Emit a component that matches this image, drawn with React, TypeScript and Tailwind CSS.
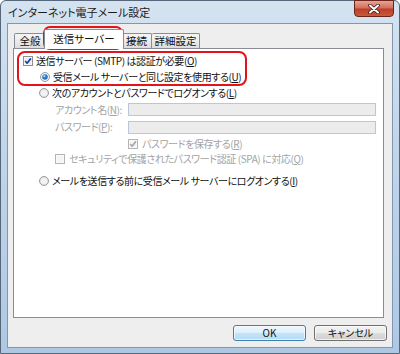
import type { ReactNode } from "react";

function Key({ k }: { k: string }) {
  return <span className="underline underline-offset-[1px]">{k}</span>;
}

function CheckBox({ checked, disabled }: { checked?: boolean; disabled?: boolean }) {
  const border = disabled ? "#b4b4b4" : "#8e8f8f";
  const fill = disabled ? "#f4f4f4" : "#e9eef6";
  const mark = disabled ? "#a8a8a8" : "#21409a";
  return (
    <svg width="10" height="10" viewBox="0 0 10 10" className="shrink-0">
      <rect x="0.5" y="0.5" width="9" height="9" fill="#ffffff" stroke={border} />
      <rect x="1.5" y="1.5" width="7" height="7" fill={fill} />
      {checked && (
        <path d="M2.2 5 L4.1 7.2 L7.9 2.4" stroke={mark} strokeWidth="1.7" fill="none" strokeLinejoin="round" />
      )}
    </svg>
  );
}

function Radio({ selected }: { selected?: boolean }) {
  return (
    <svg width="10" height="10" viewBox="0 0 10 10" className="shrink-0">
      <circle cx="5" cy="5" r="4.5" fill={selected ? "#eef3f8" : "#e4e5e7"} stroke="#9a9ca0" />
      {!selected && <circle cx="5" cy="5" r="3" fill="#f3f3f3" />}
      {selected && (
        <>
          <circle cx="5" cy="5" r="2.8" fill="#2b74c8" />
          <circle cx="4.3" cy="4.2" r="1.1" fill="#a9d6fb" />
        </>
      )}
    </svg>
  );
}

function Row({ children, className }: { children: ReactNode; className: string }) {
  return <div className={"flex items-center whitespace-nowrap " + className}>{children}</div>;
}

function Tab({ label, selected, className }: { label: string; selected?: boolean; className: string }) {
  if (selected) {
    return (
      <div
        className={
          "relative z-10 -mx-[2px] -mb-[1px] h-[20px] flex items-center justify-center border border-b-0 border-[#898c95] bg-white rounded-t-[2px] " +
          className
        }
      >
        {label}
      </div>
    );
  }
  return (
    <div
      className={
        "h-[15px] flex items-center justify-center border border-b-0 border-l-0 first:border-l border-[#898c95] bg-[linear-gradient(180deg,#f5f5f5_0%,#ebebeb_50%,#dcdcdc_100%)] rounded-t-[2px] " +
        className
      }
    >
      {label}
    </div>
  );
}

export default function App() {
  return (
    <div className="relative w-[400px] h-[354px] overflow-hidden bg-white font-['Noto_Sans_CJK_JP',sans-serif] text-[10px] tracking-[-0.4px] leading-none text-[#111] [font-feature-settings:'palt']">
      {/* window frame */}
      <div className="w-[400px] h-[354px] flex flex-col rounded-t-[6px] border border-[#56677a] bg-[linear-gradient(180deg,#d5e3f1_0%,#c4d7eb_35%,#aec8e4_100%)]">
        {/* title bar */}
        <div className="h-[22px] flex items-start">
          <div className="pl-[7px] pt-[6px] text-[11px] tracking-[0px] text-[#1b1b1b]">インターネット電子メール設定</div>
          <div className="ml-auto mr-[5px] w-[40px] h-[17px] -mt-[1px] flex items-center justify-center rounded-b-[4px] border border-[#6a2418] bg-[linear-gradient(180deg,#e7a497_0%,#d3705d_45%,#bf3d27_55%,#c85a3c_100%)]">
            <svg width="12" height="10" viewBox="0 0 12 10">
              <path d="M2 1.5 L10 8.5 M10 1.5 L2 8.5" stroke="#3d1a14" strokeWidth="3.6" strokeLinecap="round" />
              <path d="M2 1.5 L10 8.5 M10 1.5 L2 8.5" stroke="#ffffff" strokeWidth="2" strokeLinecap="round" />
            </svg>
          </div>
        </div>

        {/* client area */}
        <div className="flex-1 mx-[6px] mb-[5px] flex flex-col border border-[#8396ad] bg-[#eeeeee]">
          {/* tabs */}
          <div className="h-[24px] pl-[6px] flex items-end text-[10.5px] tracking-[0px]">
            <Tab label="全般" className="w-[32px]" />
            <Tab label="送信サーバー" selected className="w-[80px]" />
            <Tab label="接続" className="w-[30px]" />
            <Tab label="詳細設定" className="w-[48px]" />
          </div>

          {/* tab panel */}
          <div className="ml-[5px] mr-[8px] h-[270px] border border-[#898c95] bg-white pt-[4px]">
            <Row className="h-[16px] pl-[9px] gap-[3px]">
              <CheckBox checked />
              <span>
                送信サーバー (SMTP) は認証が必要(<Key k="O" />)
              </span>
            </Row>
            <Row className="h-[16px] pl-[26px] gap-[3px]">
              <Radio selected />
              <span>
                受信メール サーバーと同じ設定を使用する(<Key k="U" />)
              </span>
            </Row>
            <Row className="h-[16px] pl-[25px] gap-[3px]">
              <Radio />
              <span>
                次のアカウントとパスワードでログオンする(<Key k="L" />)
              </span>
            </Row>
            <Row className="h-[17px] pl-[41px] pr-[7px] text-[#a3a3a3]">
              <span className="w-[73px] shrink-0">
                アカウント名(<Key k="N" />):
              </span>
              <div className="flex-1 h-[13px] border border-[#b9c7d9] bg-[#ececec]" />
            </Row>
            <Row className="h-[18px] pl-[41px] pr-[7px] text-[#a3a3a3]">
              <span className="w-[73px] shrink-0">
                パスワード(<Key k="P" />):
              </span>
              <div className="flex-1 h-[13px] border border-[#b9c7d9] bg-[#ececec]" />
            </Row>
            <Row className="h-[15px] pl-[114px] gap-[4px] text-[#a3a3a3]">
              <CheckBox checked disabled />
              <span>
                パスワードを保存する(<Key k="R" />)
              </span>
            </Row>
            <Row className="h-[16px] pl-[41px] gap-[4px] text-[#a3a3a3]">
              <CheckBox disabled />
              <span>
                セキュリティで保護されたパスワード認証 (SPA) に対応(<Key k="Q" />)
              </span>
            </Row>
            <Row className="h-[16px] mt-[6px] pl-[25px] gap-[3px]">
              <Radio />
              <span>
                メールを送信する前に受信メール サーバーにログオンする(<Key k="I" />)
              </span>
            </Row>
          </div>

          {/* buttons */}
          <div className="flex justify-end gap-[8px] pr-[5px] pt-[7px] tracking-[0px]">
            <button className="w-[73px] h-[16px] flex items-center justify-center rounded-[3px] border border-[#3c7fb1] bg-[linear-gradient(180deg,#edf7fd_0%,#ddeffb_50%,#c2e4fa_52%,#b4dcf6_100%)] text-[10px] shadow-[inset_0_0_0_1px_#ffffffaa]">
              OK
            </button>
            <button className="w-[73px] h-[16px] flex items-center justify-center rounded-[3px] border border-[#707070] bg-[linear-gradient(180deg,#f2f2f2_0%,#ebebeb_50%,#dddddd_52%,#cfcfcf_100%)] text-[10px] shadow-[inset_0_0_0_1px_#ffffffaa]">
              キャンセル
            </button>
          </div>
        </div>
      </div>

      {/* red highlight marks */}
      <div className="absolute left-[43px] top-[26px] w-[80px] h-[24px] rounded-[7px] border-2 border-[#e3121b]" />
      <div className="absolute left-[17px] top-[51px] w-[230px] h-[35px] rounded-[8px] border-2 border-[#e3121b]" />
    </div>
  );
}
